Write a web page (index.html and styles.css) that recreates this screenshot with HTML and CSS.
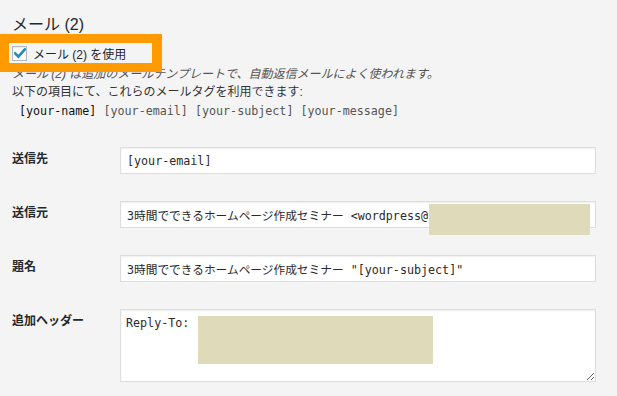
FILE: index.html
```html
<!DOCTYPE html>
<html lang="ja">
<head>
    <meta charset="UTF-8">
    <meta name="viewport" content="width=device-width, initial-scale=1.0">
    <title>メール (2)</title>
    <link rel="stylesheet" href="styles.css">
</head>
<body>
    <div class="mail-panel">
        <h2 class="panel-title">メール (2)</h2>

        <label class="use-toggle">
            <span class="checkbox">
                <svg width="12" height="11" viewBox="0 0 12 11"><path d="M1.2 5.4 L4.4 8.6 L10.8 1.4" fill="none" stroke="#1e8cbe" stroke-width="2.6" stroke-linecap="square"/></svg>
            </span>
            メール (2) を使用
        </label>

        <p class="desc">メール (2) は追加のメールテンプレートで、自動返信メールによく使われます。</p>
        <p class="note">以下の項目にて、これらのメールタグを利用できます:</p>
        <p class="tags"><span class="tag-used">[your-name]</span> [your-email] [your-subject] [your-message]</p>

        <div class="mail-form">
            <label class="field-label">送信先</label>
            <div class="field">
                <input type="text" class="text-input" value="[your-email]" readonly>
            </div>

            <label class="field-label">送信元</label>
            <div class="field">
                <input type="text" class="text-input" value="3時間でできるホームページ作成セミナー <wordpress@" readonly>
                <div class="redact redact-from"></div>
            </div>

            <label class="field-label">題名</label>
            <div class="field">
                <input type="text" class="text-input" value="3時間でできるホームページ作成セミナー &quot;[your-subject]&quot;" readonly>
            </div>

            <label class="field-label">追加ヘッダー</label>
            <div class="field">
                <textarea class="text-input text-area" readonly>Reply-To: </textarea>
                <div class="redact redact-header"></div>
            </div>
        </div>

        <!-- 強調枠 -->
        <div class="highlight"></div>
    </div>
</body>
</html>
```

FILE: styles.css
```css
body {
    margin: 0;
    background-color: #f4f4f4;
    font-family: "Liberation Sans", "Noto Sans CJK JP", sans-serif;
    font-size: 12px;
    color: #444;
}
.mail-panel {
    position: relative;
    padding: 15px 0 0 12px;
}
.panel-title {
    margin: 0;
    font-size: 16px;
    line-height: 20px;
    font-weight: normal;
    color: #23282d;
}
.use-toggle {
    display: flex;
    align-items: center;
    gap: 6px;
    height: 18px;
    margin-top: 9px;
    color: #23282d;
}
.checkbox {
    width: 13px;
    height: 13px;
    border: 1px solid #b4b9be;
    background-color: #fff;
    box-shadow: inset 0 1px 2px rgba(0,0,0,0.1);
    display: flex;
    align-items: center;
    justify-content: center;
}
.desc {
    margin: 3px 0 0;
    line-height: 18px;
    font-style: italic;
    color: #555;
}
.note {
    margin: 0;
    line-height: 19px;
    color: #333;
}
.tags {
    margin: 0;
    padding-left: 7px;
    line-height: 18px;
    font-family: "DejaVu Sans Mono", monospace;
    font-size: 11.7px;
    color: #555;
}
.tag-used {
    color: #111;
}
.mail-form {
    display: grid;
    grid-template-columns: 108px 476px;
    row-gap: 27px;
    margin-top: 27px;
}
.field-label {
    font-weight: bold;
    line-height: 24px;
    color: #23282d;
}
.field {
    position: relative;
}
.text-input {
    display: block;
    width: 100%;
    height: 27px;
    box-sizing: border-box;
    margin: 0;
    padding: 0 6px;
    border: 1px solid #ddd;
    background-color: #fff;
    box-shadow: inset 0 1px 2px rgba(0,0,0,0.07);
    font-family: "DejaVu Sans Mono", "Noto Sans CJK JP", monospace;
    font-size: 11.7px;
    color: #2a2a2a;
    outline: none;
}
.text-area {
    height: 73px;
    padding: 4px 5px;
    line-height: 18px;
    resize: both;
}
/* 伏せ字 */
.redact {
    position: absolute;
    background-color: #dfdbba;
}
.redact-from {
    left: 309px;
    top: 3px;
    width: 161px;
    height: 31px;
}
.redact-header {
    left: 78px;
    top: 7px;
    width: 235px;
    height: 48px;
}
.highlight {
    position: absolute;
    left: 0;
    top: 34px;
    width: 143px;
    height: 20px;
    border: 9px solid #ff9a00;
    border-right-width: 10px;
}
```
